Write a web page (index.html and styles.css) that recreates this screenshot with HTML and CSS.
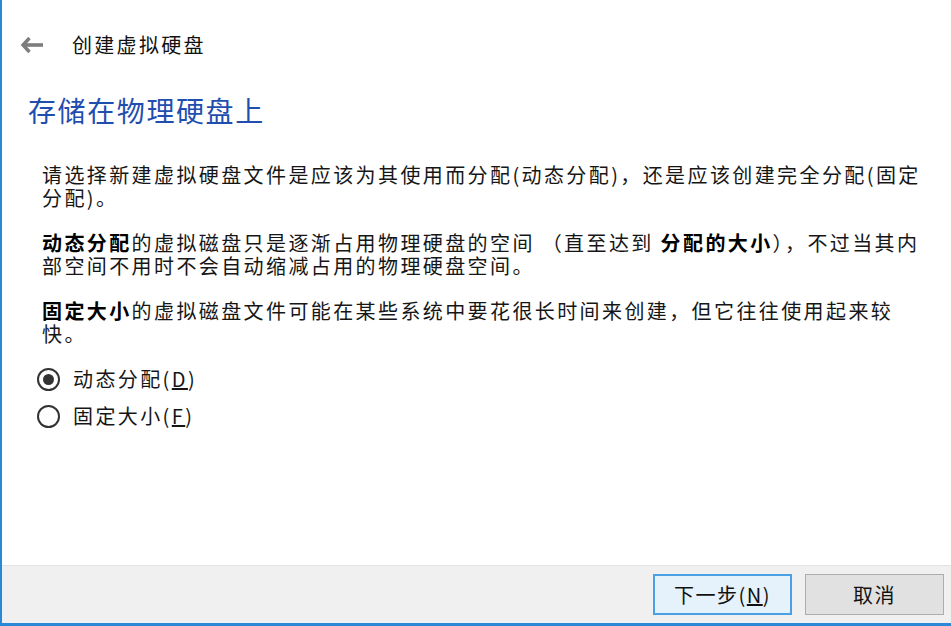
FILE: index.html
```html
<!DOCTYPE html>
<html lang="zh-CN">
<head>
<meta charset="utf-8">
<title>创建虚拟硬盘</title>
<link rel="stylesheet" href="styles.css">
</head>
<body>
<div class="dialog">
  <div class="main">
    <div class="header">
      <svg class="back" width="24" height="18" viewBox="0 0 24 18">
        <path d="M9.5 2 L3 9 L9.5 16" fill="none" stroke="#7d7d7d" stroke-width="3.4" stroke-linecap="butt" stroke-linejoin="miter"/>
        <path d="M4 9 H23" fill="none" stroke="#7d7d7d" stroke-width="3.6"/>
      </svg>
      <span class="title">创建虚拟硬盘</span>
    </div>
    <h1 class="heading">存储在物理硬盘上</h1>
    <div class="content">
      <p>请选择新建虚拟硬盘文件是应该为其使用而分配(动态分配)，还是应该创建完全分配(固定分配)。</p>
      <p><b>动态分配</b>的虚拟磁盘只是逐渐占用物理硬盘的空间 （直至达到 <b>分配的大小</b>），不过当其内部空间不用时不会自动缩减占用的物理硬盘空间。</p>
      <p><b>固定大小</b>的虚拟磁盘文件可能在某些系统中要花很长时间来创建，但它往往使用起来较快。</p>
      <div class="options">
        <label class="radio"><span class="dot checked"></span><span>动态分配(<u>D</u>)</span></label>
        <label class="radio"><span class="dot"></span><span>固定大小(<u>F</u>)</span></label>
      </div>
    </div>
  </div>
  <div class="footer">
    <button class="btn primary">下一步(<u>N</u>)</button>
    <button class="btn">取消</button>
  </div>
</div>
</body>
</html>
```
FILE: styles.css
```css
html, body {
  margin: 0;
  padding: 0;
  background: #ffffff;
}
body {
  font-family: "Noto Sans CJK SC", "Noto Sans", sans-serif;
  color: #161616;
}
.dialog {
  width: 951px;
  height: 626px;
  box-sizing: border-box;
  border-left: 2px solid #2b88d8;
  border-bottom: 3px solid #2b88d8;
  display: flex;
  flex-direction: column;
}
.main {
  flex: 1;
  background: #ffffff;
}
.header {
  display: flex;
  align-items: center;
  height: 24px;
  padding: 33px 0 0 18px;
}
.back {
  display: block;
  margin-right: 28px;
}
.title {
  font-size: 20px;
  line-height: 24px;
  letter-spacing: 2.3px;
  color: #111;
}
.heading {
  margin: 36px 0 0 26px;
  font-size: 28px;
  line-height: 34px;
  font-weight: normal;
  letter-spacing: 1.6px;
  color: #1f4eae;
}
.content {
  padding: 36px 20px 0 40px;
}
.content p {
  margin: 0 0 22px 0;
  font-size: 20px;
  line-height: 23px;
  letter-spacing: 2.4px;
}
.content b {
  font-weight: bold;
  color: #000;
}
.options {
  display: flex;
  flex-direction: column;
  gap: 13px;
  margin-left: -5px;
}
.radio {
  display: flex;
  align-items: center;
  font-size: 20px;
  line-height: 24px;
  letter-spacing: 2.4px;
}
.dot {
  width: 19px;
  height: 19px;
  border: 2px solid #333;
  border-radius: 50%;
  margin-right: 13px;
  box-sizing: content-box;
  display: flex;
  align-items: center;
  justify-content: center;
}
.dot.checked::after {
  content: "";
  width: 11px;
  height: 11px;
  border-radius: 50%;
  background: #333;
}
.footer {
  height: 57px;
  background: #f0f0f0;
  border-top: 1px solid #e3e3e3;
  display: flex;
  justify-content: flex-end;
  align-items: center;
  gap: 13px;
  padding-right: 7px;
}
.btn {
  width: 139px;
  height: 41px;
  box-sizing: border-box;
  border: 1px solid #adadad;
  background: #e1e1e1;
  font-family: "Noto Sans CJK SC", "Noto Sans", sans-serif;
  font-size: 20px;
  letter-spacing: 1.5px;
  color: #111;
  padding: 0;
}
.btn.primary {
  border: 2px solid #4aa0e6;
  background: #e5f1fb;
}
```
